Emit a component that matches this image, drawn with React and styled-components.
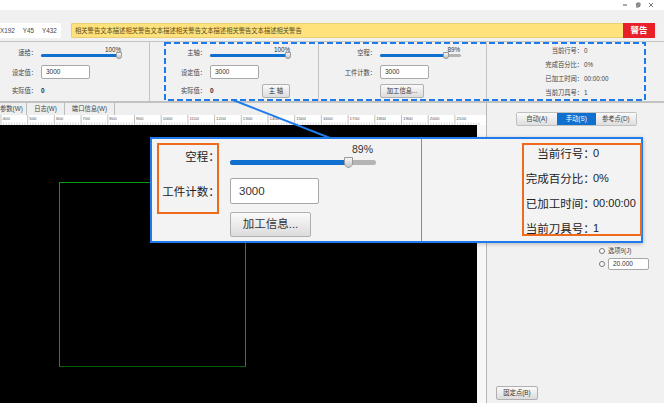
import styled, { createGlobalStyle } from 'styled-components';

const GlobalStyle = createGlobalStyle`
  html, body { margin: 0; padding: 0; background: #fff; }
  * { box-sizing: border-box; }
  body {
    font-family: "Liberation Sans", "Noto Sans CJK SC", sans-serif;
    font-feature-settings: "halt";
    color: #333;
  }
`;

const Page = styled.div`
  position: relative;
  width: 664px;
  height: 403px;
  overflow: hidden;
  display: flex;
  flex-direction: column;
  background: #f1f1f1;
`;

const TitleBar = styled.div`
  height: 10px;
  background: #fff;
  display: flex;
  justify-content: flex-end;
  align-items: center;
  gap: 8px;
  padding-right: 10px;
  svg { display: block; }
`;

const Strip = styled.div`
  height: 12px;
  background: #f0f0f0;
`;

const StatusRow = styled.div`
  height: 20px;
  display: flex;
  padding: 1px 9px 3px 0;
  border-bottom: 1px solid #c4c4c4;
`;

const Position = styled.div`
  width: 61px;
  background: #fff;
  font-size: 6.3px;
  display: flex;
  align-items: center;
  gap: 8px;
  white-space: nowrap;
  color: #444;
`;

const Warning = styled.div`
  margin-left: 10px;
  flex: 1;
  display: flex;
  background: #ffe27c;
  border: 1px solid #e9cf73;
  border-radius: 1px;
`;

const WarningText = styled.div`
  flex: 1;
  font-size: 6.3px;
  line-height: 13px;
  padding-left: 3px;
  color: #5a4a20;
  white-space: nowrap;
`;

const WarningTag = styled.div`
  width: 32px;
  margin: -1px -1px -1px 0;
  background: #e8202a;
  color: #fff;
  font-size: 8.5px;
  font-weight: bold;
  text-align: center;
  line-height: 15px;
`;

const PanelRow = styled.div`
  height: 61px;
  display: flex;
  border-bottom: 2px solid #c2c2c2;
`;

const Panel = styled.div`
  width: ${p => p.$w}px;
  flex: none;
  border-right: 1px solid #c4c4c4;
  display: grid;
  grid-template-columns: ${p => p.$label}px 80px;
  grid-template-rows: 21px 18px 19px;
  column-gap: 7px;
  align-items: center;
`;

const Label = styled.div`
  font-size: 6.3px;
  text-align: right;
  white-space: nowrap;
  color: #444;
`;

const Control = styled.div`
  display: flex;
  align-items: center;
  justify-content: space-between;
  font-size: 6.5px;
  font-weight: bold;
`;

const SliderCell = styled.div`
  padding-top: ${p => p.$top}px;
`;

const SliderBox = styled.div`
  position: relative;
  width: ${p => p.$w}px;
  height: ${p => p.$h}px;
  border-radius: ${p => p.$h}px;
  background: #b4b4b4;
`;

const SliderFill = styled.div`
  height: 100%;
  border-radius: inherit;
  background: #0f70cf;
`;

const Thumb = styled.div`
  position: absolute;
  top: 50%;
  width: ${p => p.$s}px;
  height: ${p => p.$s * 1.25}px;
  margin-left: ${p => -p.$s / 2}px;
  margin-top: ${p => -p.$s * 0.6}px;
  background: linear-gradient(#f6f6f6, #c6c6c6);
  border: 1px solid #9a9a9a;
  border-radius: 1px 1px 50% 50%;
`;

const SliderValue = styled.span`
  position: absolute;
  right: ${p => p.$right}px;
  bottom: ${p => p.$bottom}px;
  font-size: ${p => p.$size}px;
  font-weight: normal;
  color: #333;
`;

const ValueInput = styled.div`
  width: ${p => p.$w || 49}px;
  height: ${p => p.$h || 14}px;
  background: #fff;
  border: 1px solid #a8a8a8;
  border-radius: 2px;
  font-size: ${p => p.$size || 6.5}px;
  font-weight: normal;
  line-height: ${p => (p.$h || 14) - 2}px;
  padding-left: ${p => p.$pad || 4}px;
  color: #333;
`;

const Button = styled.div`
  width: ${p => p.$w}px;
  height: ${p => p.$h}px;
  border: 1px solid #b0b0b0;
  border-radius: 2px;
  background: linear-gradient(#fafafa, #dcdcdc);
  font-size: ${p => p.$size || 6.3}px;
  font-weight: normal;
  text-align: center;
  line-height: ${p => p.$h - 2}px;
  color: #333;
  white-space: nowrap;
`;

const InfoPanel = styled.div`
  flex: 1;
  display: grid;
  grid-template-rows: repeat(4, 14px);
  align-content: center;
  padding-right: 20px;
`;

const InfoRow = styled.div`
  display: grid;
  grid-template-columns: 93px auto;
  column-gap: 4px;
  align-items: center;
  font-size: 6.3px;
  color: #444;
  white-space: nowrap;
  span:first-child { text-align: right; }
`;

const Main = styled.div`
  flex: 1;
  display: flex;
  min-height: 0;
`;

const Work = styled.div`
  width: 487px;
  display: flex;
  flex-direction: column;
  border-right: 1px solid #b5b5b5;
`;

const Tabs = styled.div`
  height: 12px;
  display: flex;
  background: #efefef;
`;

const Tab = styled.div`
  width: ${p => p.$w}px;
  border-right: 1px solid #bdbdbd;
  font-size: 6.3px;
  line-height: 12px;
  text-align: center;
  padding-right: ${p => p.$shift || 0}px;
  color: #444;
  white-space: nowrap;
`;

const Ruler = styled.svg`
  display: block;
  width: 486px;
  height: 10px;
  background: #fff;
`;

const CanvasRow = styled.div`
  flex: 1;
  display: flex;
  background: #f7f7f7;
`;

const Canvas = styled.div`
  position: relative;
  width: 477px;
  background: #000;
`;

const Drawn = styled.div`
  position: absolute;
  left: 59px;
  top: 57px;
  width: 187px;
  height: 185px;
  border: 1px solid #0a9a0a;
  border-bottom-color: #056005;
`;

const Side = styled.div`
  flex: 1;
  display: flex;
  flex-direction: column;
  padding: 9px 0 3px 9px;
`;

const Segments = styled.div`
  display: flex;
  align-self: flex-start;
  margin-left: 20px;
  height: 14px;
  border: 1px solid #c0c0c0;
  border-radius: 2px;
`;

const Segment = styled.div`
  width: 39.5px;
  text-align: center;
  font-size: 6.3px;
  line-height: 12px;
  white-space: nowrap;
  color: ${p => (p.$active ? '#fff' : '#444')};
  background: ${p => (p.$active ? '#0f70cf' : 'linear-gradient(#fafafa, #dedede)')};
`;

const Options = styled.div`
  margin-top: auto;
  margin-bottom: 116px;
  margin-left: 103px;
  display: flex;
  flex-direction: column;
  gap: 3px;
`;

const OptionRow = styled.div`
  display: flex;
  align-items: center;
  gap: 3px;
  font-size: 6.3px;
  height: ${p => p.$h}px;
  color: #444;
`;

const Radio = styled.span`
  width: 6px;
  height: 6px;
  border: 1px solid #777;
  border-radius: 50%;
  background: #fff;
`;

const Callout = styled.div`
  position: absolute;
  left: 150px;
  top: 137px;
  width: 493px;
  height: 106px;
  background: #f3f3f3;
  border: 2px solid #1f7bec;
  display: flex;
  box-shadow: 0 1px 4px rgba(0, 0, 0, 0.25);
`;

const CalloutLeft = styled.div`
  width: 270px;
  border-right: 1px solid #8c8c8c;
  display: grid;
  grid-template-columns: 62px 1fr;
  grid-template-rows: 34px 36px 31px;
  column-gap: 16px;
  align-items: center;
`;

const BigLabel = styled.div`
  font-size: 11.5px;
  text-align: right;
  white-space: nowrap;
  color: #222;
`;

const CalloutRight = styled.div`
  flex: 1;
  display: grid;
  grid-template-rows: repeat(4, 25px);
  padding-top: 1px;
`;

const BigInfo = styled.div`
  display: grid;
  grid-template-columns: 167px auto;
  column-gap: 4px;
  align-items: center;
  font-size: 11.5px;
  color: #222;
  white-space: nowrap;
  span:first-child { text-align: right; }
  span:last-child { font-size: 11px; }
`;

const Marker = styled.div`
  position: absolute;
  left: ${p => p.$x}px;
  top: ${p => p.$y}px;
  width: ${p => p.$w}px;
  height: ${p => p.$h}px;
  border: 2px solid #f06a1e;
`;

const Annotation = styled.svg`
  position: absolute;
  inset: 0;
  pointer-events: none;
`;

const Slider = ({ w, h, value, pos, thumb, size, right, bottom, top }) => (
  <SliderCell $top={top}>
    <SliderBox $w={w} $h={h}>
      <SliderFill style={{ width: `${pos}%` }} />
      <Thumb $s={thumb} style={{ left: `${pos}%` }} />
      <SliderValue $size={size} $right={right} $bottom={bottom}>{value}%</SliderValue>
    </SliderBox>
  </SliderCell>
);

const rulerMarks = Array.from({ length: 18 }, (_, i) => 400 + i * 100);

const App = () => (
  <Page>
    <GlobalStyle />
    <TitleBar>
      <svg width="5" height="6"><path d="M0 3h4" stroke="#555" /></svg>
      <svg width="5" height="6"><path d="M1 1h3v3H1zM0 2h3v3H0z" fill="none" stroke="#555" strokeWidth="0.8" /></svg>
      <svg width="5" height="6"><path d="M0 1l4 4M4 1L0 5" stroke="#555" strokeWidth="0.8" /></svg>
    </TitleBar>
    <Strip />
    <StatusRow>
      <Position><span>X192</span><span>Y45</span><span>Y432</span></Position>
      <Warning>
        <WarningText>相关警告文本描述相关警告文本描述相关警告文本描述相关警告文本描述相关警告</WarningText>
        <WarningTag>警告</WarningTag>
      </Warning>
    </StatusRow>
    <PanelRow>
      <Panel $w={150} $label={34}>
        <Label>速给：</Label>
        <Slider w={80} h={3} value={100} pos={97} thumb={6} size={6.3} right={0} bottom={4} top={6} />
        <Label>设定值：</Label>
        <Control><ValueInput>3000</ValueInput></Control>
        <Label>实际值：</Label>
        <Control>0</Control>
      </Panel>
      <Panel $w={169} $label={53}>
        <Label>主轴：</Label>
        <Slider w={80} h={3} value={100} pos={97} thumb={6} size={6.3} right={0} bottom={4} top={6} />
        <Label>设定值：</Label>
        <Control><ValueInput>3000</ValueInput></Control>
        <Label>实际值：</Label>
        <Control>0<Button $w={28} $h={14}>主 轴</Button></Control>
      </Panel>
      <Panel $w={168} $label={54}>
        <Label>空程：</Label>
        <Slider w={81} h={3} value={89} pos={82} thumb={6} size={6.3} right={1} bottom={4} top={6} />
        <Label>工件计数：</Label>
        <Control><ValueInput>3000</ValueInput></Control>
        <span />
        <Control><Button $w={44} $h={14}>加工信息...</Button></Control>
      </Panel>
      <InfoPanel>
        <InfoRow><span>当前行号：</span><span>0</span></InfoRow>
        <InfoRow><span>完成百分比：</span><span>0%</span></InfoRow>
        <InfoRow><span>已加工时间：</span><span>00:00:00</span></InfoRow>
        <InfoRow><span>当前刀具号：</span><span>1</span></InfoRow>
      </InfoPanel>
    </PanelRow>
    <Main>
      <Work>
        <Tabs>
          <Tab $w={27} $shift={6}>参数(W)</Tab>
          <Tab $w={38}>日志(W)</Tab>
          <Tab $w={50}>端口信息(W)</Tab>
        </Tabs>
        <Ruler viewBox="0 0 486 10">
          {rulerMarks.map((mark, i) => (
            <g key={mark}>
              <text x={2.5 + i * 26.7} y={5} fontSize="4.4" fill="#555">{mark}</text>
              <path d={`M${1 + i * 26.7} 0v10`} stroke="#999" strokeWidth="0.6" />
              {[1, 2, 3, 4, 5, 6, 7, 8, 9].map(t => (
                <path key={t} d={`M${1 + i * 26.7 + t * 2.67} 7.5v2.5`} stroke="#aaa" strokeWidth="0.5" />
              ))}
            </g>
          ))}
        </Ruler>
        <CanvasRow>
          <Canvas><Drawn /></Canvas>
        </CanvasRow>
      </Work>
      <Side>
        <Segments>
          <Segment>自动(A)</Segment>
          <Segment $active>手动(S)</Segment>
          <Segment>参考点(D)</Segment>
        </Segments>
        <Options>
          <OptionRow $h={9}><Radio />选项9(J)</OptionRow>
          <OptionRow $h={12}><Radio /><ValueInput $w={41} $h={12}>20.000</ValueInput></OptionRow>
        </Options>
        <Button $w={42} $h={14}>固定点(B)</Button>
      </Side>
    </Main>
    <Annotation width="664" height="403" viewBox="0 0 664 403">
      <rect x="165" y="43" width="480" height="57" fill="none" stroke="#1f7bec" strokeWidth="2" strokeDasharray="6 3" />
      <path d="M233 100L330 138" stroke="#1f7bec" strokeWidth="2" />
    </Annotation>
    <Callout>
      <CalloutLeft>
        <BigLabel>空程：</BigLabel>
        <Slider w={146} h={5} value={89} pos={81} thumb={9} size={10.5} right={3} bottom={10} top={12} />
        <BigLabel>工件计数：</BigLabel>
        <ValueInput $w={89} $h={26} $size={11.5} $pad={8}>3000</ValueInput>
        <span />
        <Button $w={81} $h={25} $size={11.5}>加工信息...</Button>
      </CalloutLeft>
      <CalloutRight>
        <BigInfo><span>当前行号：</span><span>0</span></BigInfo>
        <BigInfo><span>完成百分比：</span><span>0%</span></BigInfo>
        <BigInfo><span>已加工时间：</span><span>00:00:00</span></BigInfo>
        <BigInfo><span>当前刀具号：</span><span>1</span></BigInfo>
      </CalloutRight>
      <Marker $x={5} $y={4} $w={62} $h={71} />
      <Marker $x={370} $y={4} $w={120} $h={93} />
    </Callout>
  </Page>
);

export default App;
